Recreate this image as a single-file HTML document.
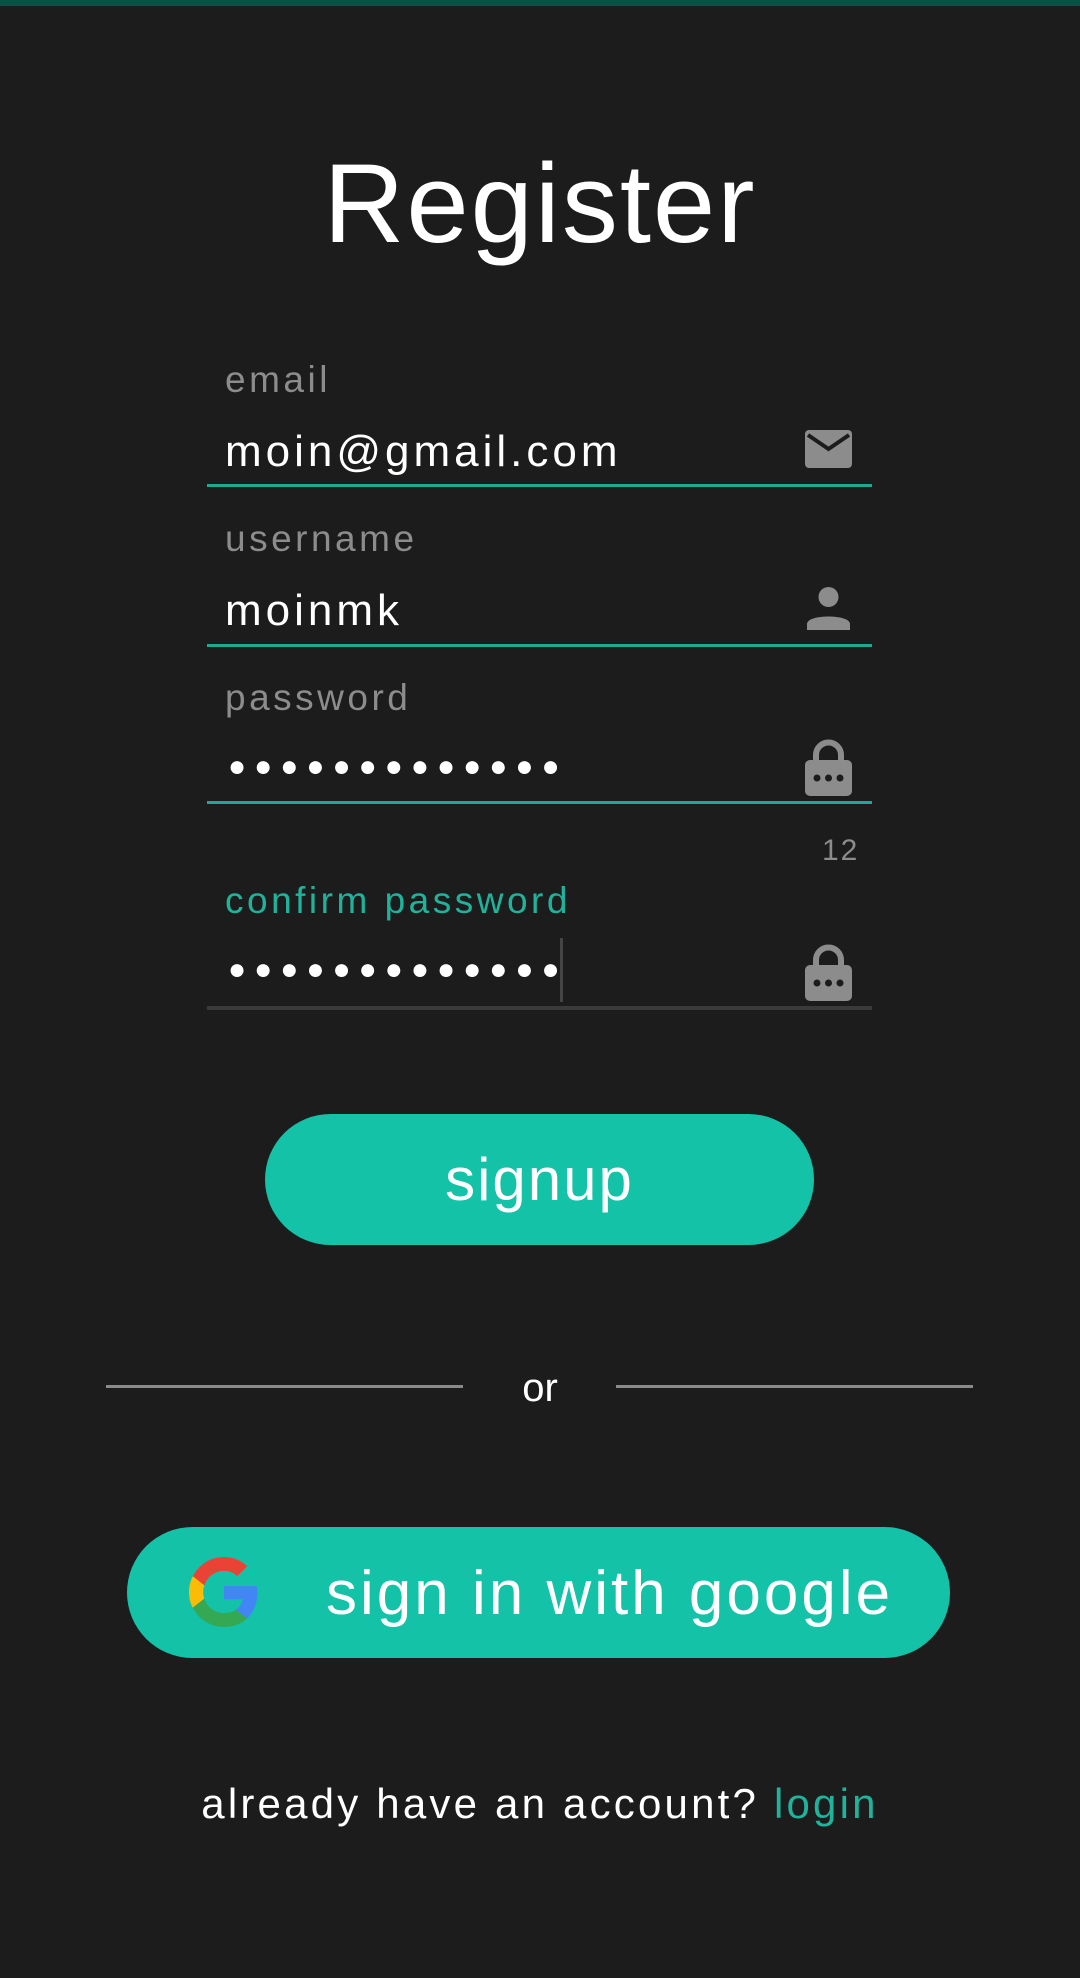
<!DOCTYPE html>
<html><head><meta charset="utf-8"><style>
*{margin:0;padding:0;box-sizing:border-box}
body{width:1080px;height:1978px;background:#1d1c1d;font-family:"Liberation Sans",sans-serif;position:relative;overflow:hidden;color:#fff}
.a{position:absolute;white-space:nowrap}
.lbl{color:#8c8c8c;font-size:37px;left:225px;letter-spacing:3.5px}
.val{font-size:44px;left:225px;color:#fff;letter-spacing:4px}
.line{position:absolute;left:207px;width:665px;height:3px;background:#1fa894}
.dots{left:228px;font-size:30px;letter-spacing:8px}
.ic{position:absolute;left:805px}
</style></head><body>
<div class="a" style="left:0;top:0;width:1080px;height:6px;background:#0c4f45"></div>
<div class="a" style="left:0;width:1080px;top:139px;text-align:center;font-size:112px;line-height:130px;letter-spacing:2px">Register</div>

<div class="a lbl" style="top:359px">email</div>
<div class="a val" style="top:427px">moin@gmail.com</div>
<svg class="ic" style="top:430px" width="47" height="38" viewBox="0 0 47 38"><rect x="0" y="0" width="47" height="38" rx="4" fill="#8c8c8c"/><path d="M3 5 L23.5 19 L44 5" stroke="#1d1c1d" stroke-width="4" fill="none"/></svg>
<div class="line" style="top:484px"></div>

<div class="a lbl" style="top:518px">username</div>
<div class="a val" style="top:586px">moinmk</div>
<svg class="ic" style="top:586px" width="47" height="44" viewBox="0 0 47 44"><circle cx="23.5" cy="11" r="10" fill="#8c8c8c"/><path d="M2 44 V38 C2 28 45 28 45 38 V44 Z" fill="#8c8c8c"/></svg>
<div class="line" style="top:644px"></div>

<div class="a lbl" style="top:677px">password</div>
<div class="a val dots" style="top:750px">●●●●●●●●●●●●●</div>
<svg class="ic" style="top:738px" width="47" height="58" viewBox="0 0 47 58"><path d="M11 26 V17 A12.5 12.5 0 0 1 36 17 V26" stroke="#8c8c8c" stroke-width="6" fill="none"/><rect x="0" y="22" width="47" height="36" rx="5" fill="#8c8c8c"/><circle cx="12" cy="40" r="3.5" fill="#1d1c1d"/><circle cx="23.5" cy="40" r="3.5" fill="#1d1c1d"/><circle cx="35" cy="40" r="3.5" fill="#1d1c1d"/></svg>
<div class="line" style="top:801px"></div>
<div class="a" style="left:822px;top:834px;font-size:30px;color:#8c8c8c;letter-spacing:2px">12</div>

<div class="a lbl" style="top:880px;color:#1fb39c">confirm password</div>
<div class="a val dots" style="top:953px">●●●●●●●●●●●●●</div>
<div class="a" style="left:560px;top:938px;width:3px;height:64px;background:#444"></div>
<svg class="ic" style="top:943px" width="47" height="58" viewBox="0 0 47 58"><path d="M11 26 V17 A12.5 12.5 0 0 1 36 17 V26" stroke="#8c8c8c" stroke-width="6" fill="none"/><rect x="0" y="22" width="47" height="36" rx="5" fill="#8c8c8c"/><circle cx="12" cy="40" r="3.5" fill="#1d1c1d"/><circle cx="23.5" cy="40" r="3.5" fill="#1d1c1d"/><circle cx="35" cy="40" r="3.5" fill="#1d1c1d"/></svg>
<div class="line" style="top:1006px;background:#3a3a3a;height:4px"></div>

<div class="a" style="left:265px;top:1114px;width:549px;height:131px;border-radius:66px;background:#14c2a8;text-align:center;line-height:131px;font-size:60px;letter-spacing:2px">signup</div>

<div class="a" style="left:106px;top:1385px;width:357px;height:3px;background:#8a8a8a"></div>
<div class="a" style="left:616px;top:1385px;width:357px;height:3px;background:#8a8a8a"></div>
<div class="a" style="left:0;width:1080px;text-align:center;top:1366px;font-size:40px">or</div>

<div class="a" style="left:127px;top:1527px;width:823px;height:131px;border-radius:66px;background:#14c2a8"></div>
<svg class="a" style="left:189px;top:1557px" width="70" height="70" viewBox="0 0 48 48">
<path fill="#EA4335" d="M24 9.5c3.5 0 6.6 1.2 9.1 3.6l6.8-6.8C35.8 2.4 30.2 0 24 0 14.6 0 6.6 5.4 2.6 13.3l7.9 6.2C12.4 13.7 17.7 9.5 24 9.5z"/>
<path fill="#4285F4" d="M46.9 24.5c0-1.6-.1-3.1-.4-4.5H24v9h12.9c-.6 3-2.3 5.5-4.8 7.2l7.7 6c4.5-4.2 7.1-10.3 7.1-17.7z"/>
<path fill="#FBBC05" d="M10.5 28.6c-.5-1.5-.8-3-.8-4.6s.3-3.1.8-4.6l-7.9-6.2C.9 16.5 0 20.1 0 24s.9 7.5 2.6 10.8l7.9-6.2z"/>
<path fill="#34A853" d="M24 48c6.5 0 11.9-2.1 15.9-5.8l-7.7-6c-2.2 1.5-5 2.3-8.2 2.3-6.3 0-11.6-4.2-13.5-10l-7.9 6.2C6.6 42.6 14.6 48 24 48z"/>
</svg>
<div class="a" style="left:326px;top:1558px;font-size:62px;letter-spacing:3px">sign in with google</div>

<div class="a" style="left:0;width:1080px;text-align:center;top:1780px;font-size:42px;letter-spacing:3.2px">already have an account? <span style="color:#1fb39c">login</span></div>
</body></html>
